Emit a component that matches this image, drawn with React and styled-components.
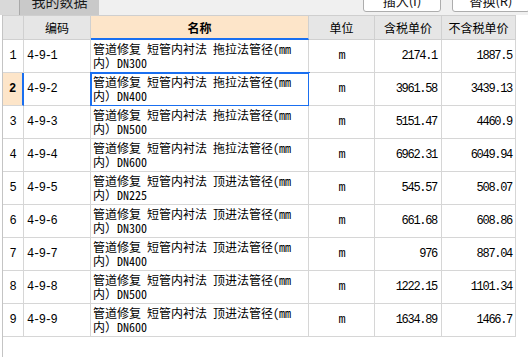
import React from "react";
import styled, { createGlobalStyle } from "styled-components";

const GlobalStyle = createGlobalStyle`
  html, body {
    margin: 0;
    padding: 0;
    background: #ffffff;
  }
`;

const rows = [
  { no: 1, code: "4-9-1", method: "拖拉法", dn: "DN300", unit: "m", tax: "2174.1", notax: "1887.5" },
  { no: 2, code: "4-9-2", method: "拖拉法", dn: "DN400", unit: "m", tax: "3961.58", notax: "3439.13" },
  { no: 3, code: "4-9-3", method: "拖拉法", dn: "DN500", unit: "m", tax: "5151.47", notax: "4460.9" },
  { no: 4, code: "4-9-4", method: "拖拉法", dn: "DN600", unit: "m", tax: "6962.31", notax: "6049.94" },
  { no: 5, code: "4-9-5", method: "顶进法", dn: "DN225", unit: "m", tax: "545.57", notax: "508.07" },
  { no: 6, code: "4-9-6", method: "顶进法", dn: "DN300", unit: "m", tax: "661.68", notax: "608.86" },
  { no: 7, code: "4-9-7", method: "顶进法", dn: "DN400", unit: "m", tax: "976", notax: "887.04" },
  { no: 8, code: "4-9-8", method: "顶进法", dn: "DN500", unit: "m", tax: "1222.15", notax: "1101.34" },
  { no: 9, code: "4-9-9", method: "顶进法", dn: "DN600", unit: "m", tax: "1634.89", notax: "1466.7" },
];

const selectedRow = 2;

const App = () => {
  return (
    <Page>
      <GlobalStyle />
      <TopBar>
        <LeftStub />
        <Tab>我的数据</Tab>
        <Spacer />
        <ActionButton>插入(I)</ActionButton>
        <ActionButton>替换(R)</ActionButton>
      </TopBar>
      <Body>
        <Grid>
          <HeadCell />
          <HeadCell>编码</HeadCell>
          <HeadCell $active>名称</HeadCell>
          <HeadCell>单位</HeadCell>
          <HeadCell>含税单价</HeadCell>
          <HeadCell>不含税单价</HeadCell>

          {rows.map((r) => {
            const sel = r.no === selectedRow;
            return (
              <React.Fragment key={r.no}>
                <NoCell $selected={sel}>{r.no}</NoCell>
                <CodeCell>{r.code}</CodeCell>
                <NameCell $selected={sel}>
                  <NameLine>管道修复 短管内衬法 {r.method}管径(mm</NameLine>
                  <NameLine>内）{r.dn}</NameLine>
                </NameCell>
                <UnitCell>{r.unit}</UnitCell>
                <PriceCell $pad={4}>{r.tax}</PriceCell>
                <PriceCell $pad={3}>{r.notax}</PriceCell>
              </React.Fragment>
            );
          })}
        </Grid>
      </Body>
    </Page>
  );
};

const Page = styled.div`
  width: 528px;
  height: 357px;
  overflow: hidden;
  background: #ffffff;
  display: flex;
  flex-direction: column;
`;

const TopBar = styled.div`
  height: 15px;
  flex: none;
  display: flex;
  overflow: hidden;
  background: #f0f0f0;
  font-family: "Noto Sans CJK SC", sans-serif;
`;

const LeftStub = styled.div`
  width: 19px;
  background: #d9d9d9;
  border-right: 1px solid #a9a9a9;
`;

const Tab = styled.div`
  width: 79px;
  height: 21px;
  margin-top: -6px;
  background: #c9c9c9;
  text-align: center;
  font-size: 14px;
  line-height: 14px;
  color: #1a1a1a;
`;

const Spacer = styled.div`
  flex: 1;
`;

const ActionButton = styled.div`
  width: 76px;
  height: 16px;
  margin-top: -6px;
  margin-right: 11px;
  flex: none;
  border: 1px solid #adadad;
  border-radius: 3px;
  background: #ffffff;
  text-align: center;
  font-size: 13px;
  line-height: 12px;
  color: #111;
  &:last-child {
    margin-right: -2px;
  }
`;

const Body = styled.div`
  flex: 1;
  margin-left: 2px;
  border-left: 1px solid #c4c4c4;
`;

const Grid = styled.div`
  display: grid;
  grid-template-columns: 21px 67px 218px 66px 67px 74px;
  grid-template-rows: 24px repeat(9, 33px);
  width: 513px;
  border-top: 1px solid #cfcfcf;
`;

const Cell = styled.div`
  box-sizing: border-box;
  border-right: 1px solid #d6d6d6;
  border-bottom: 1px solid #d6d6d6;
  background: #ffffff;
  color: #000;
  overflow: hidden;
  white-space: nowrap;
`;

const HeadCell = styled(Cell)`
  background: ${(p) => (p.$active ? "#fde5c9" : "#e6e6e6")};
  border-bottom: ${(p) => (p.$active ? "2px solid #1a6ff0" : "1px solid #d0d0d0")};
  border-right-color: #d0d0d0;
  display: flex;
  align-items: center;
  justify-content: center;
  font-family: "Noto Sans CJK SC", sans-serif;
  font-size: 12px;
  font-weight: ${(p) => (p.$active ? 700 : 400)};
  padding-top: ${(p) => (p.$active ? "1px" : "0")};
`;

const NoCell = styled(Cell)`
  display: flex;
  align-items: center;
  justify-content: center;
  background: ${(p) => (p.$selected ? "#fde5c9" : "#ffffff")};
  border-right: ${(p) => (p.$selected ? "2px solid #1a6ff0" : "1px solid #d6d6d6")};
  font-family: "Liberation Mono", monospace;
  font-size: 12px;
  font-weight: ${(p) => (p.$selected ? 700 : 400)};
`;

const Mono = styled(Cell)`
  display: flex;
  align-items: center;
  font-family: "Liberation Mono", monospace;
  font-size: 12px;
  letter-spacing: -1.3px;
`;

const CodeCell = styled(Mono)`
  padding-left: 3px;
`;

const UnitCell = styled(Mono)`
  justify-content: center;
`;

const PriceCell = styled(Mono)`
  justify-content: flex-end;
  padding-right: ${(p) => p.$pad}px;
`;

const NameCell = styled(Cell)`
  display: flex;
  flex-direction: column;
  gap: 1px;
  padding: 2px 0 0 2px;
  font-family: "Noto Sans Mono CJK SC", "Noto Sans CJK SC", sans-serif;
  font-size: 12px;
  outline: ${(p) => (p.$selected ? "2px solid #1a6ff0" : "none")};
  outline-offset: -1px;
`;

const NameLine = styled.div`
  height: 13px;
  line-height: 13px;
`;

export default App;
